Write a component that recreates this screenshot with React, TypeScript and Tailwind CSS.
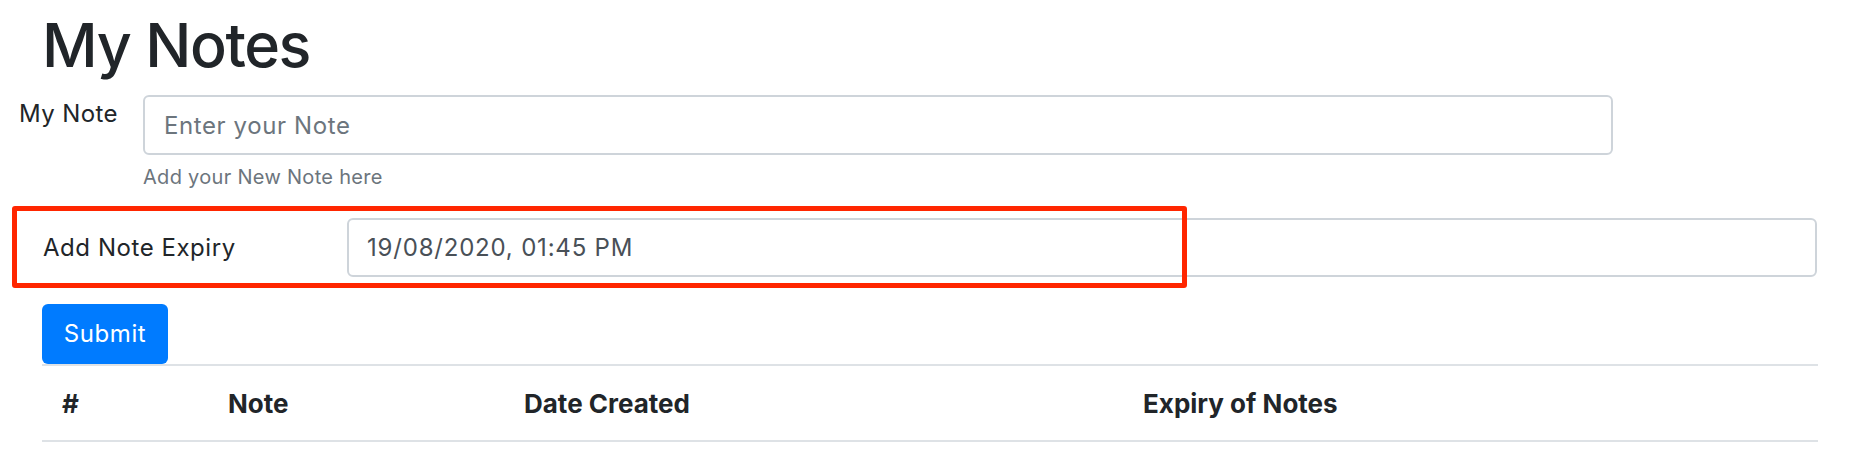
import React from "react";

export default function App() {
  return (
    <div className="w-[1872px] h-[472px] bg-white text-[#212529] font-['Inter','Liberation_Sans',sans-serif] overflow-hidden">
      <div className="pl-[42px] pt-[15px]">
        <h1 className="text-[61px] leading-none font-medium tracking-[-1.4px]">My Notes</h1>
      </div>

      <div className="mt-[19px] flex items-start pl-[19px]">
        <label className="w-[124px] mt-[7px] text-[24px] leading-none tracking-[0.4px]">My Note</label>
        <div className="flex flex-col">
          <input
            className="w-[1470px] h-[60px] border-2 border-[#ced4da] rounded-[6px] pl-[19px] text-[24px] tracking-[0.6px] text-[#495057] placeholder:text-[#6c757d] outline-none"
            placeholder="Enter your Note"
          />
          <span className="mt-[12px] text-[20px] leading-none tracking-[0.3px] text-[#6c757d]">Add your New Note here</span>
        </div>
      </div>

      <div className="relative mt-[31px] flex items-center pl-[43px]">
        <label className="w-[304px] text-[24px] leading-none tracking-[0.55px]">Add Note Expiry</label>
        <div className="w-[1470px] h-[59px] border-2 border-[#ced4da] rounded-[6px] pl-[18px] flex items-center text-[24px] tracking-[0.8px] text-[#495057]">
          19/08/2020, 01:45 PM
        </div>
        <div className="absolute left-[12px] top-[-12px] w-[1175px] h-[82px] border-[5px] border-[#ff2600] rounded-[3px] pointer-events-none" />
      </div>

      <div className="pl-[42px] mt-[27px]">
        <button className="w-[126px] h-[60px] rounded-[6px] bg-[#007bff] text-white text-[24px] tracking-[0.6px] flex items-center justify-center">
          Submit
        </button>
      </div>

      <div className="ml-[42px] w-[1776px] border-t-2 border-b-2 border-[#dee2e6] h-[78px] flex items-center text-[26px] font-bold">
        <div className="w-[166px] pl-[20px]">#</div>
        <div className="w-[296px] pl-[20px]">Note</div>
        <div className="w-[619px] pl-[20px]">Date Created</div>
        <div className="flex-1 pl-[20px]">Expiry of Notes</div>
      </div>
    </div>
  );
}
